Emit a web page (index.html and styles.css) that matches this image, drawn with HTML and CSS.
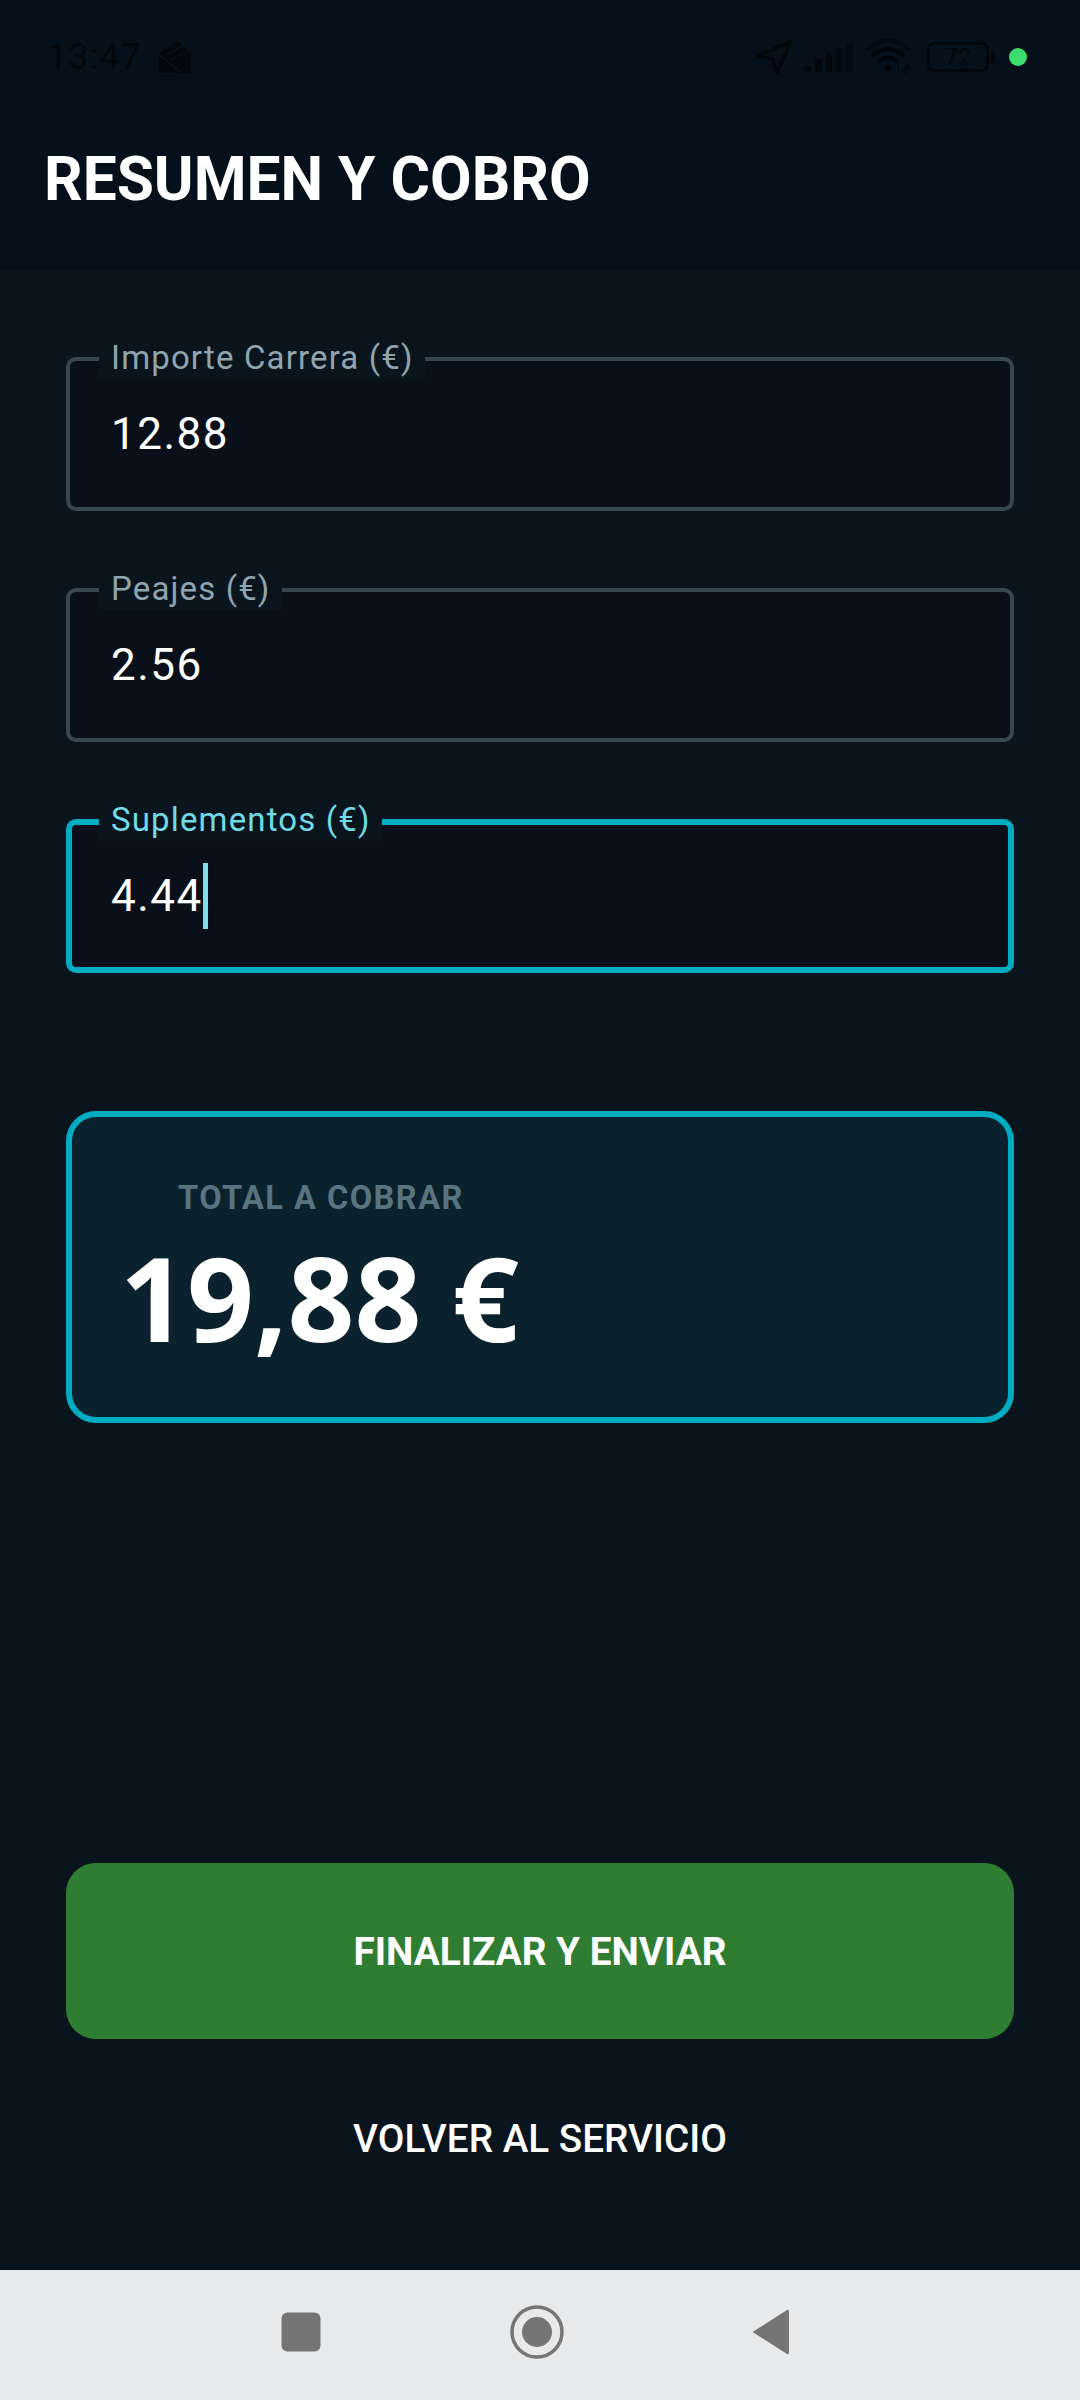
FILE: index.html
```html
<!DOCTYPE html>
<html lang="es">
<head>
<meta charset="UTF-8" />
<meta name="viewport" content="width=device-width, initial-scale=1" />
<title>Resumen y cobro</title>
<link rel="stylesheet" href="styles.css">
</head>
<body>

<header class="top">
  <div class="status-bar">
    <div class="status-left">
      <span class="clock">13:47</span>
      <svg class="ic-mail" width="34" height="34" viewBox="0 0 34 34">
        <path d="M1 14 L15 2 Q17 0 19 1 L33 13 V29 a4 4 0 0 1-4 4 H5 a4 4 0 0 1-4-4Z" fill="#03070b"/>
        <path d="M3 11 L19 1 M7 15 L27 5 M12 20 L32 10 M1 15 L24 33" fill="none" stroke="#06101a" stroke-width="1.6"/>
      </svg>
    </div>
    <div class="status-right">
      <svg class="ic-nav" width="38" height="38" viewBox="0 0 38 38">
        <path d="M35 3 L3 18 L17 21 L21 35Z" fill="none" stroke="#03070b" stroke-width="3.5" stroke-linejoin="round"/>
      </svg>
      <svg class="ic-signal" width="48" height="30" viewBox="0 0 48 30">
        <rect x="0" y="24" width="6" height="6" fill="#03070b"/>
        <rect x="10" y="17" width="7" height="13" fill="#03070b"/>
        <rect x="21" y="11" width="6" height="19" fill="#03070b"/>
        <rect x="31" y="6" width="6" height="24" fill="#030b12"/>
        <rect x="41" y="1" width="7" height="29" fill="#030b12"/>
      </svg>
      <svg class="ic-wifi" width="48" height="36" viewBox="0 0 48 36">
        <path d="M1 11 Q23 -8 45 11" fill="none" stroke="#030b12" stroke-width="4"/>
        <path d="M7 17 Q23 3 39 17" fill="none" stroke="#03070b" stroke-width="4"/>
        <path d="M14 23 Q23 14 32 23" fill="none" stroke="#03070b" stroke-width="4"/>
        <path d="M18 28 Q23 23 28 28 L23 33Z" fill="#03070b"/>
        <path d="M33 34 V25 M41 34 V25 L45 30 H37Z" fill="none" stroke="#030b12" stroke-width="2"/>
      </svg>
      <div class="battery"><span>72</span></div>
      <span class="dot"></span>
    </div>
  </div>
  <h1>RESUMEN Y COBRO</h1>
</header>

<main class="content">
  <div class="field">
    <label>Importe Carrera (€)</label>
    <div class="value">12.88</div>
  </div>
  <div class="field">
    <label>Peajes (€)</label>
    <div class="value">2.56</div>
  </div>
  <div class="field focused">
    <label>Suplementos (€)</label>
    <div class="value">4.44<span class="caret"></span></div>
  </div>

  <section class="total">
    <div class="total-label">TOTAL A COBRAR</div>
    <div class="total-value">19,88 €</div>
  </section>

  <div class="actions">
    <button class="btn-send">FINALIZAR Y ENVIAR</button>
    <button class="btn-back">VOLVER AL SERVICIO</button>
  </div>
</main>

<nav class="nav-bar">
  <svg class="nav-square" width="40" height="40" viewBox="0 0 40 40">
    <rect x="0.5" y="0.5" width="39" height="39" rx="6" fill="#757575"/>
  </svg>
  <svg class="nav-home" width="54" height="54" viewBox="0 0 54 54">
    <circle cx="27" cy="27" r="25" fill="none" stroke="#757575" stroke-width="3.5"/>
    <circle cx="27" cy="27" r="15" fill="#757575"/>
  </svg>
  <svg class="nav-back" width="38" height="48" viewBox="0 0 38 48">
    <path d="M35 2 Q37 1 37 4 V44 Q37 47 35 46 L2 25 Q0 24 2 23Z" fill="#757575"/>
  </svg>
</nav>

</body>
</html>
```

FILE: styles.css
```css
body {
  margin: 0;
  width: 1080px;
  height: 2400px;
  display: flex;
  flex-direction: column;
  background: #0a141c;
  color: white;
  font-family: Roboto, sans-serif;
}
.top {
  height: 270px;
  box-sizing: border-box;
  background: #06101a;
  padding: 0 44px;
}
.status-bar {
  height: 114px;
  display: flex;
  justify-content: space-between;
  align-items: center;
  color: #03070b;
}
.status-left {
  display: flex;
  align-items: center;
  gap: 16px;
  margin-left: 3px;
}
.clock {
  font-size: 36px;
  letter-spacing: 1px;
}
.status-right {
  display: flex;
  align-items: center;
  margin-right: 9px;
}
.ic-signal { margin-left: 11px; }
.ic-wifi { margin-left: 12px; margin-right: 14px; }
.battery {
  width: 56px;
  height: 24px;
  border: 3px solid #03070b;
  border-radius: 7px;
  display: flex;
  align-items: center;
  justify-content: center;
  font-size: 24px;
  position: relative;
}
.battery:after {
  content: "";
  position: absolute;
  right: -9px;
  top: 6px;
  width: 4px;
  height: 12px;
  background: #03070b;
  border-radius: 0 2px 2px 0;
}
.dot {
  width: 18px;
  height: 18px;
  border-radius: 50%;
  background: #3ddc6f;
  margin-left: 20px;
}
h1 {
  margin: 31px 0 0;
  font-size: 60.4px;
  line-height: 70px;
  font-weight: 700;
}
.content {
  flex: 1;
  display: flex;
  flex-direction: column;
  padding: 87px 66px 0;
}
.field {
  position: relative;
  height: 154px;
  box-sizing: border-box;
  margin-bottom: 77px;
  padding-left: 41px;
  display: flex;
  align-items: center;
  background: #091019;
  border: 4px solid #37474f;
  border-radius: 10px;
}
.field label {
  position: absolute;
  left: 29px;
  top: -20px;
  padding: 2px 11px 0 12px;
  height: 36px;
  line-height: 30px;
  background: #0a141c;
  color: #90a4ae;
  font-size: 33px;
  letter-spacing: 1.15px;
}
.value {
  font-size: 44px;
  letter-spacing: 1.5px;
  display: flex;
  align-items: center;
}
.focused {
  border: 6px solid #00acc1;
  padding-left: 39px;
  margin-bottom: 0;
}
.focused label {
  left: 27px;
  top: -22px;
  color: #72d9e6;
}
.caret {
  width: 5px;
  height: 66px;
  background: #80deea;
}
.total {
  margin-top: 138px;
  height: 312px;
  box-sizing: border-box;
  border: 6px solid #00acc1;
  border-radius: 30px;
  background: #0a222e;
  padding: 62px 0 0 48px;
}
.total-label {
  margin-left: 58px;
  font-size: 32.5px;
  line-height: 38px;
  font-weight: 700;
  letter-spacing: 1.5px;
  color: #587480;
}
.total-value {
  margin-top: 20px;
  font-family: "Open Sans", sans-serif;
  font-size: 117.2px;
  line-height: 120px;
  font-weight: 700;
}
.actions {
  margin-top: auto;
  display: flex;
  flex-direction: column;
}
.actions button {
  border: none;
  color: white;
  font-family: Roboto, sans-serif;
  padding: 0;
  font-size: 38.7px;
}
.btn-send {
  height: 176px;
  background: #2e7d32;
  border-radius: 30px;
  font-weight: 700;
}
.btn-back {
  height: 100px;
  margin-top: 49px;
  margin-bottom: 82px;
  background: none;
  font-weight: 500;
}
.nav-bar {
  height: 130px;
  box-sizing: border-box;
  padding: 0 0 6px 281px;
  background: #e8e9eb;
  display: flex;
  align-items: center;
}
.nav-square { margin-right: 189px; }
.nav-home { margin-right: 188px; }
```
